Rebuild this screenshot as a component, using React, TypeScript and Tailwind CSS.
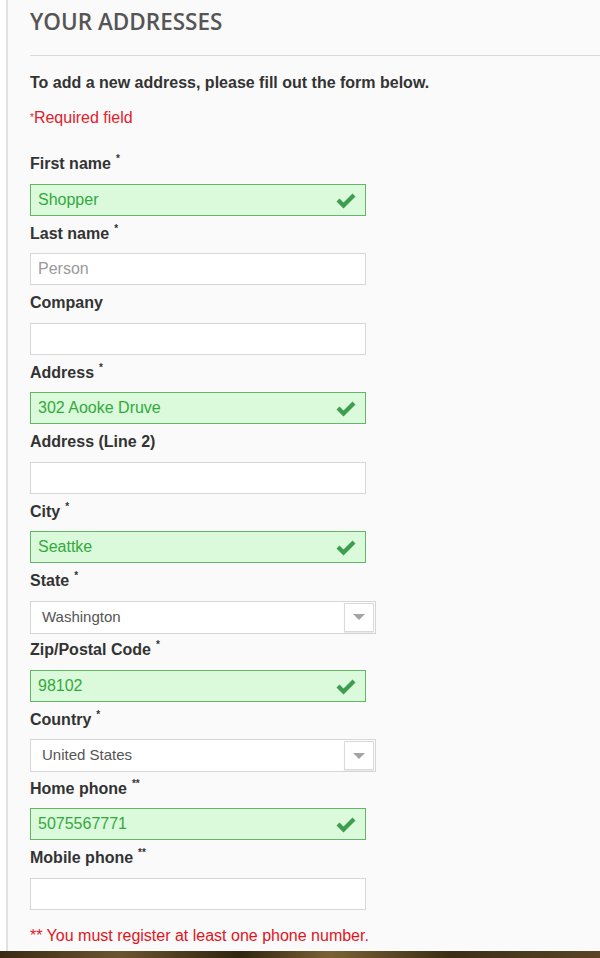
import React from 'react';

type Field = {
  label: string;
  req?: '*' | '**';
  kind: 'ok' | 'empty' | 'placeholder' | 'select';
  value?: string;
};

const FIELDS: Field[] = [
  { label: 'First name', req: '*', kind: 'ok', value: 'Shopper' },
  { label: 'Last name', req: '*', kind: 'placeholder', value: 'Person' },
  { label: 'Company', kind: 'empty' },
  { label: 'Address', req: '*', kind: 'ok', value: '302 Aooke Druve' },
  { label: 'Address (Line 2)', kind: 'empty' },
  { label: 'City', req: '*', kind: 'ok', value: 'Seattke' },
  { label: 'State', req: '*', kind: 'select', value: 'Washington' },
  { label: 'Zip/Postal Code', req: '*', kind: 'ok', value: '98102' },
  { label: 'Country', req: '*', kind: 'select', value: 'United States' },
  { label: 'Home phone', req: '**', kind: 'ok', value: '5075567771' },
  { label: 'Mobile phone', req: '**', kind: 'empty' },
];

function Check() {
  return (
    <svg width="22" height="18" viewBox="0 0 22 18" className="absolute right-[8px] top-[7px]">
      <path d="M1.5 9.5 L4.5 6.5 L8.5 10.5 L17.5 1.5 L20.5 4.5 L8.5 16.5 Z" fill="#3f9d4f" />
    </svg>
  );
}

function Control({ f }: { f: Field }) {
  if (f.kind === 'select') {
    return (
      <div className="relative w-[346px] h-[33px] bg-white border border-[#d6d6d6] flex items-center">
        <span className="pl-[11px] text-[15px] text-[#555]">{f.value}</span>
        <div className="absolute right-[1px] top-[1px] w-[30px] h-[29px] border border-[#d9d9d9] bg-white flex items-center justify-center shadow-[0_1px_1px_rgba(0,0,0,0.08)]">
          <svg width="14" height="8" viewBox="0 0 14 8">
            <path d="M1 1 L13 1 L7 7 Z" fill="#a4a4a4" />
          </svg>
        </div>
      </div>
    );
  }
  if (f.kind === 'ok') {
    return (
      <div className="relative w-[336px] h-[32px] bg-[#dafadb] border border-[#62b665] flex items-center">
        <span className="pl-[7px] text-[16px] text-[#33a93c]">{f.value}</span>
        <Check />
      </div>
    );
  }
  return (
    <div className="w-[336px] h-[32px] bg-white border border-[#d6d6d6] flex items-center">
      {f.kind === 'placeholder' && <span className="pl-[7px] text-[16px] text-[#9a9a9a]">{f.value}</span>}
    </div>
  );
}

export default function App() {
  return (
    <div className="w-[600px] h-[958px] overflow-hidden bg-white font-['Liberation_Sans',Arial,sans-serif] flex flex-col">
      <div className="flex-1 flex pl-[6px]">
        <div className="flex-1 border-l-2 border-[#e2e2e2] bg-[#fafafa] pl-[22px]">
          <h1 className="pt-[6px] h-[40px] font-['Open_Sans',sans-serif] font-semibold text-[22.5px] leading-[32px] text-[#555]">
            YOUR ADDRESSES
          </h1>
          <div className="mt-[15px] border-t border-[#d9d9d9]" />
          <p className="mt-[17px] text-[16px] leading-[20px] font-bold text-[#333]">
            To add a new address, please fill out the form below.
          </p>
          <p className="mt-[15px] text-[16px] leading-[20px] text-[#e3202a]">
            <sup className="text-[10px] relative top-[-2px]">*</sup>Required field
          </p>
          <div className="mt-[26px]">
            {FIELDS.map((f) => (
              <div key={f.label} className={f.kind === 'select' ? 'pb-[6.5px]' : 'pb-[8px]'}>
                <div className="h-[20px] text-[16px] leading-[20px] font-bold text-[#333]">
                  {f.label}
                  {f.req && <span className="ml-[5px] text-[10px] relative top-[-7px]">{f.req}</span>}
                </div>
                <div className="mt-[9.5px]">
                  <Control f={f} />
                </div>
              </div>
            ))}
          </div>
          <p className="mt-[8px] text-[16px] leading-[20px] text-[#e3131c]">
            ** You must register at least one phone number.
          </p>
        </div>
      </div>
      <div className="h-[7px] bg-[linear-gradient(90deg,#3a2a14,#6b5530_20%,#2e2410_40%,#7a6235_55%,#3b2e16_75%,#5a4626)]" />
    </div>
  );
}
